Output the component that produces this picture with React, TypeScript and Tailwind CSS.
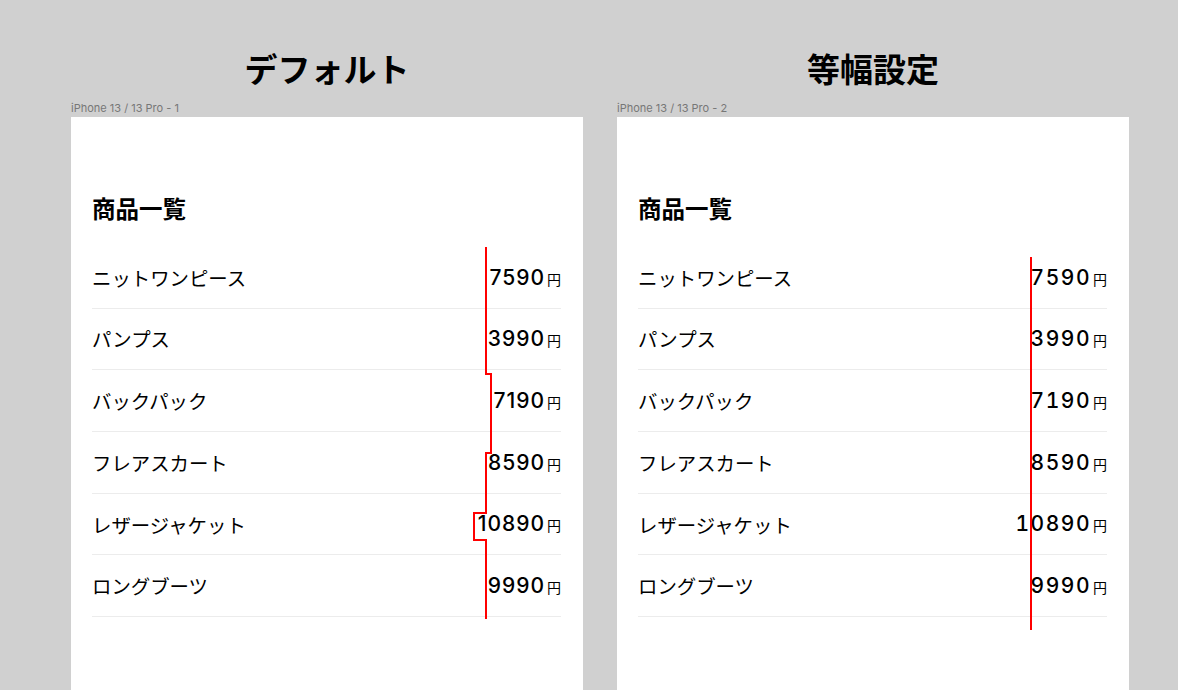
const items = [
  { name: "ニットワンピース", price: "7590" },
  { name: "パンプス", price: "3990" },
  { name: "バックパック", price: "7190" },
  { name: "フレアスカート", price: "8590" },
  { name: "レザージャケット", price: "10890" },
  { name: "ロングブーツ", price: "9990" },
];

const jp = "font-['Noto_Sans_CJK_JP',sans-serif]";

function Phone({
  title,
  label,
  tabular,
  line,
}: {
  title: string;
  label: string;
  tabular: boolean;
  line: string;
}) {
  return (
    <div className="w-[512px] flex flex-col">
      <h1 className={`${jp} text-[33px] leading-[40px] font-bold text-black text-center`}>
        {title}
      </h1>
      <p className="mt-[13px] mb-[2px] font-['Inter',sans-serif] text-[11px] leading-[14px] text-[#777]">
        {label}
      </p>
      <div className="relative h-[573px] bg-white pl-[21px] pr-[22px] pt-[75px]">
        <h2 className={`${jp} text-[23.5px] leading-[32px] font-bold text-black`}>商品一覧</h2>
        <ul className="mt-[23px]">
          {items.map((item) => (
            <li
              key={item.name}
              className="h-[61.7px] border-b border-[#ececec] flex items-center justify-between"
            >
              <span className={`${jp} text-[19.4px] text-black`}>{item.name}</span>
              <span className="flex items-baseline">
                <span
                  className={`font-['Inter',sans-serif] text-[21px] font-medium text-black ${
                    tabular ? "tabular-nums tracking-[1.5px]" : "tracking-[1px]"
                  }`}
                >
                  {item.price}
                </span>
                <span className={`${jp} ml-[2px] text-[14px] text-black`}>円</span>
              </span>
            </li>
          ))}
        </ul>

        {/* annotation line */}
        <svg className="absolute inset-0 pointer-events-none" width="512" height="573">
          <polyline points={line} fill="none" stroke="#ff0000" strokeWidth="2" />
        </svg>
      </div>
    </div>
  );
}

export default function App() {
  return (
    <div className="min-h-screen bg-[#d0d0d0] pl-[71px] pt-[48px] flex gap-[34px] overflow-hidden h-[690px]">
      <Phone
        title="デフォルト"
        label="iPhone 13 / 13 Pro - 1"
        tabular={false}
        line="415,130 415,257 420,257 420,336 415,336 415,396 403,396 403,423 415,423 415,502"
      />
      <Phone
        title="等幅設定"
        label="iPhone 13 / 13 Pro - 2"
        tabular
        line="414,140 414,513"
      />
    </div>
  );
}
